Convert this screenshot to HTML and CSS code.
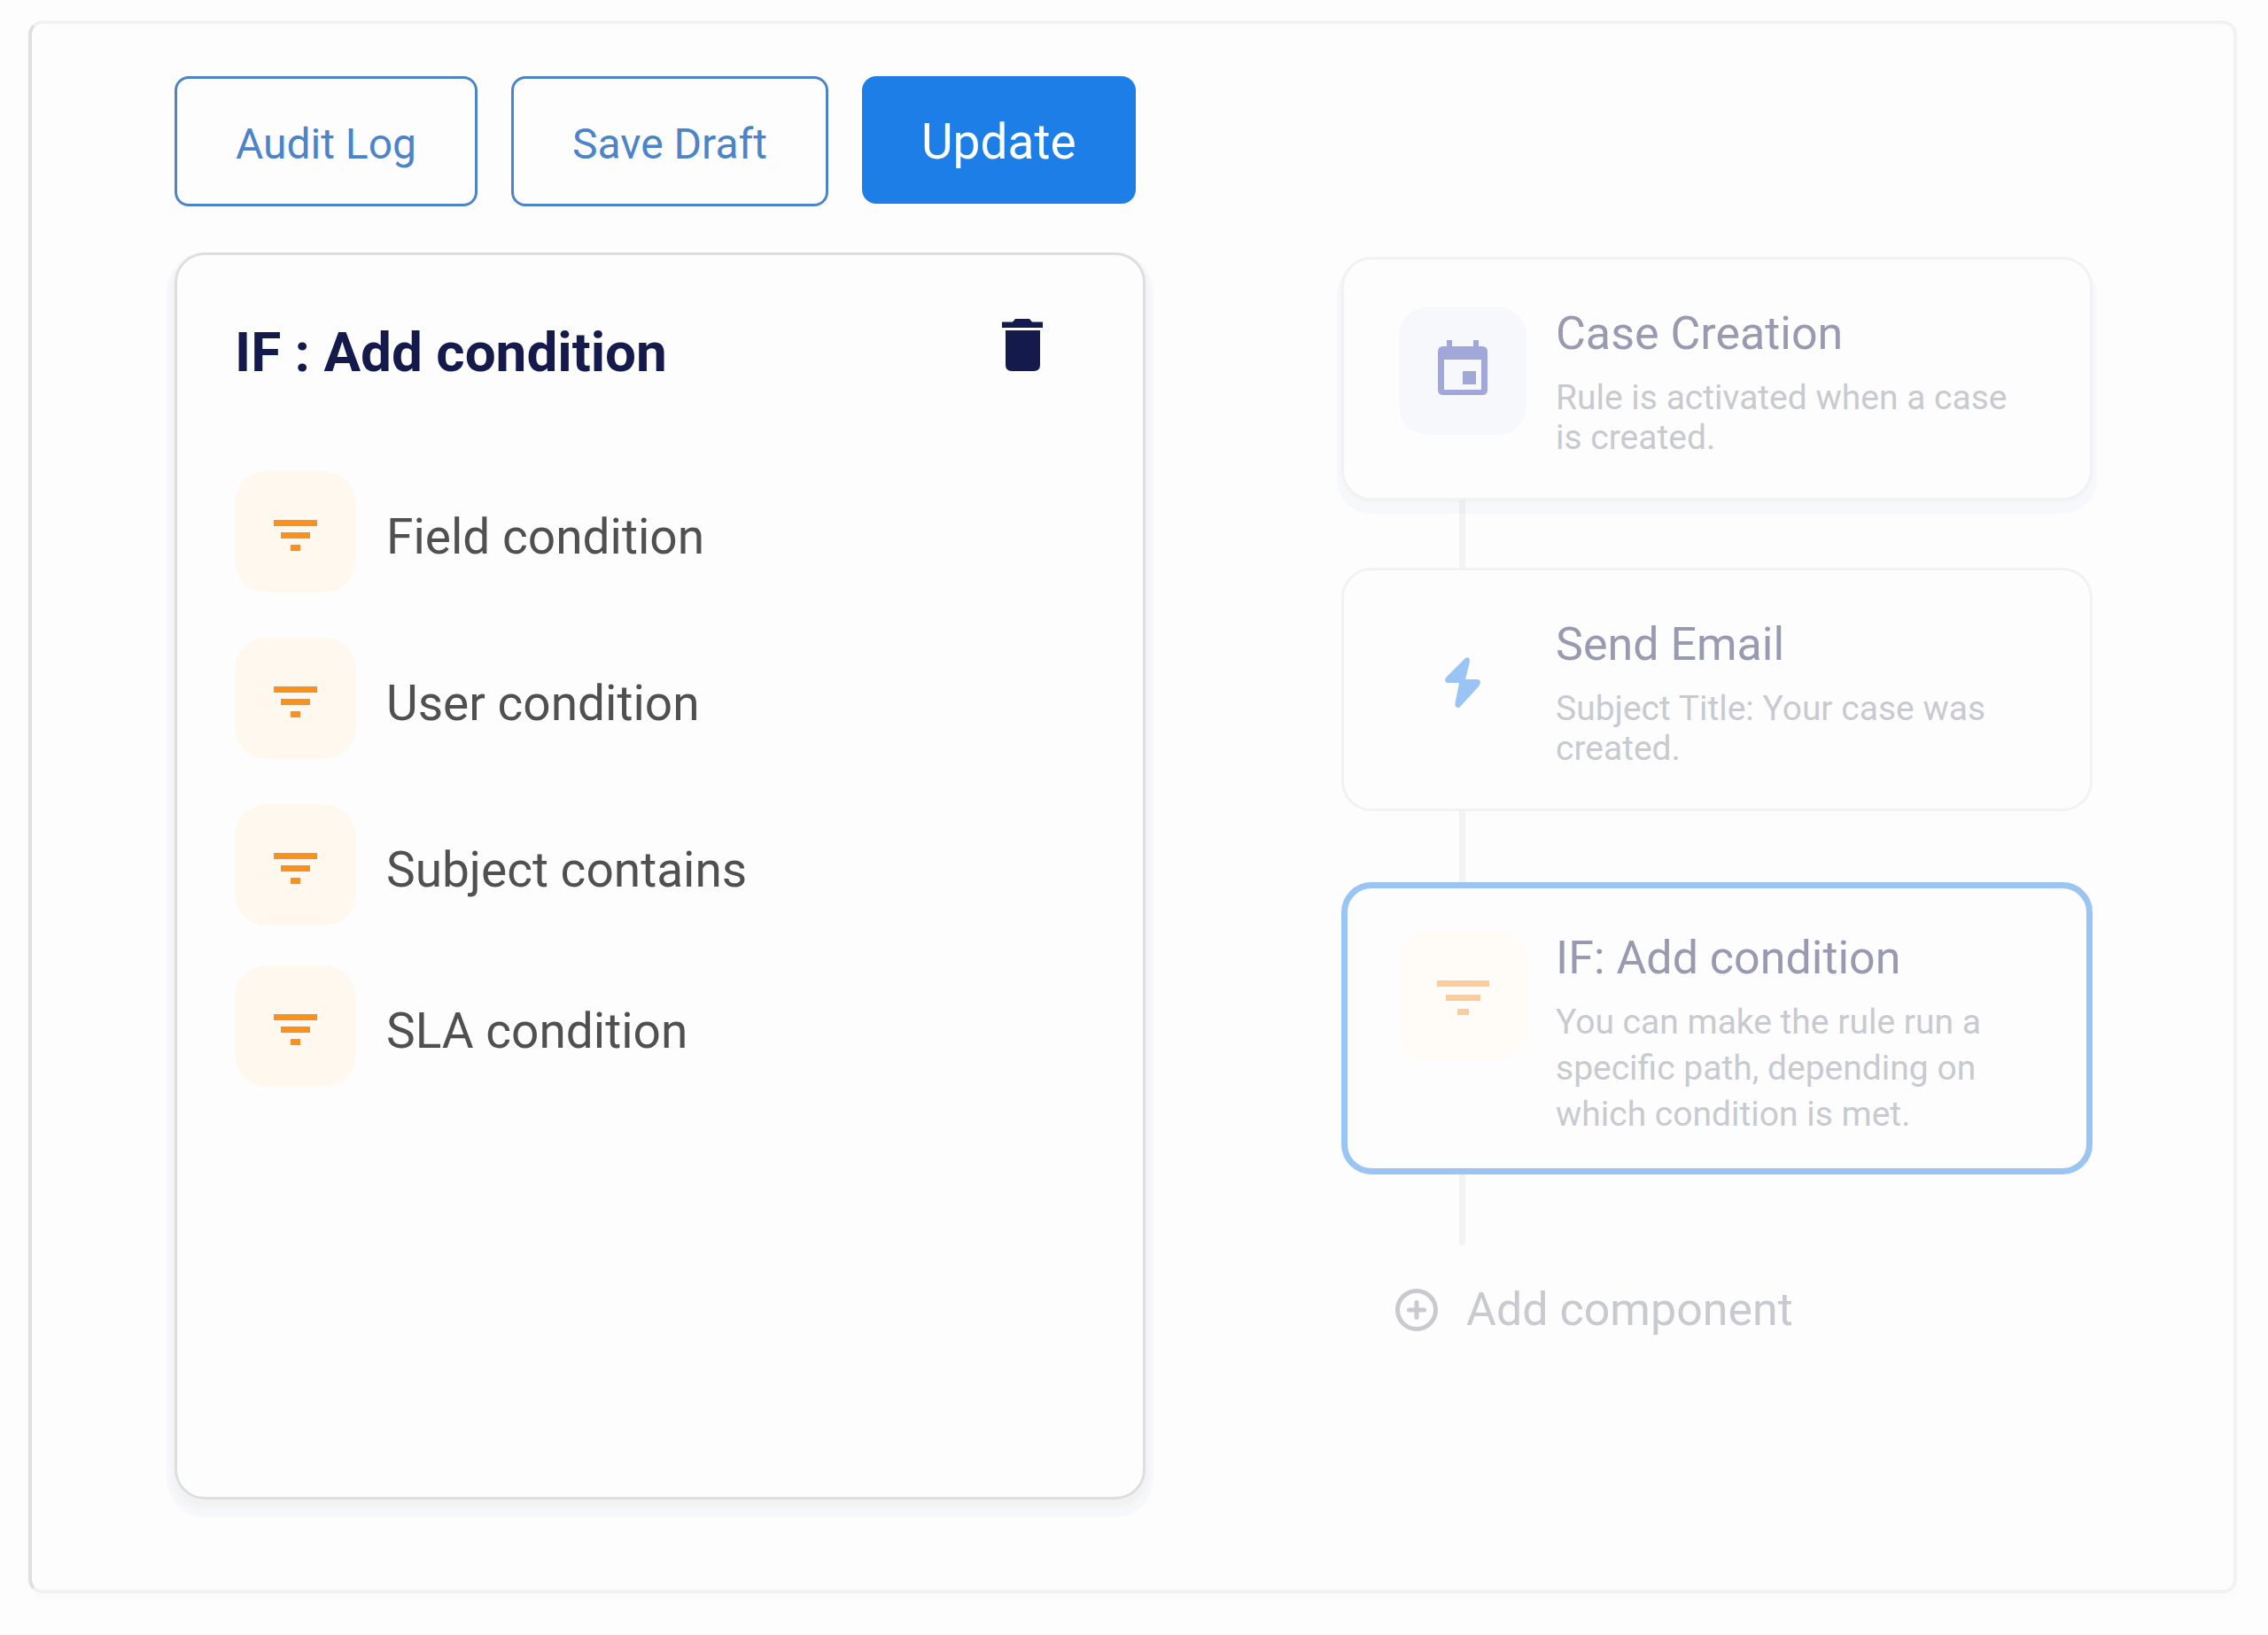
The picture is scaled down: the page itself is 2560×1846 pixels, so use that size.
FILE: index.html
```html
<!DOCTYPE html>
<html lang="en">
<head>
<meta charset="utf-8">
<meta name="viewport" content="width=device-width, initial-scale=1">
<title>Rule editor</title>
<link rel="stylesheet" href="styles.css">
</head>
<body>
<svg class="sprite" aria-hidden="true">
  <symbol id="filter" viewBox="0 0 49 42">
    <path d="M0 7h49v7H0zM8 21h33v7H8zM19 35h11v7H19z"/>
  </symbol>
</svg>
<main class="frame">
  <div class="toolbar">
    <button class="btn" type="button">Audit Log</button>
    <button class="btn" type="button">Save Draft</button>
    <button class="btn btn-primary" type="button">Update</button>
  </div>
  <div class="workspace">
    <section class="panel">
      <header class="panel-header">
        <h1 class="panel-title">IF : Add condition</h1>
        <button class="icon-btn" type="button" aria-label="Delete">
          <svg width="46" height="59" viewBox="0 0 46 59"><path d="M0 3.500h12L15 0h16l3 3.500h12V10H0zM4 13h39v39q0 7-7 7H11q-7 0-7-7z"/></svg>
        </button>
      </header>
      <ul class="conditions">
        <li><button class="condition" type="button"><span class="tile"><svg width="49" height="42"><use href="#filter"/></svg></span><span class="condition-label">Field condition</span></button></li>
        <li><button class="condition" type="button"><span class="tile"><svg width="49" height="42"><use href="#filter"/></svg></span><span class="condition-label">User condition</span></button></li>
        <li><button class="condition" type="button"><span class="tile"><svg width="49" height="42"><use href="#filter"/></svg></span><span class="condition-label">Subject contains</span></button></li>
        <li><button class="condition" type="button"><span class="tile"><svg width="49" height="42"><use href="#filter"/></svg></span><span class="condition-label">SLA condition</span></button></li>
      </ul>
    </section>
    <section class="flow">
      <article class="card card-raised">
        <span class="card-icon card-icon-trigger">
          <svg width="56" height="70" viewBox="0 0 56 70"><path fill-rule="evenodd" d="M10 0h6v7h24V0h6v7h4q6 0 6 6v43q0 6-6 6H6q-6 0-6-6V13q0-6 6-6h4zM7 22v34h42V22zM28 35h15v15H28z"/></svg>
        </span>
        <div class="card-body">
          <h2 class="card-title">Case Creation</h2>
          <p class="card-text">Rule is activated when a case is created.</p>
        </div>
      </article>
      <div class="connector connector-short"></div>
      <article class="card">
        <span class="card-icon card-icon-action">
          <svg width="40" height="57" viewBox="0 0 40 57"><path d="M22 2Q25-1 27 1Q28 2 28 5L23 25H36Q41 25 39.500 30L38 33L17 56Q15 58 12.500 56Q11 55 11.500 52L16 29H4Q-1 29 .5 24L2 22Z"/></svg>
        </span>
        <div class="card-body">
          <h2 class="card-title">Send Email</h2>
          <p class="card-text">Subject Title: Your case was created.</p>
        </div>
      </article>
      <div class="connector"></div>
      <article class="card card-selected">
        <span class="card-icon card-icon-condition">
          <svg width="59" height="43" viewBox="0 0 59 43"><path d="M0 4h59v7H0zM10 20h39v7H10zM23 36h13v7H23z"/></svg>
        </span>
        <div class="card-body">
          <h2 class="card-title">IF: Add condition</h2>
          <p class="card-text">You can make the rule run a specific path, depending on which condition is met.</p>
        </div>
      </article>
      <div class="connector"></div>
      <button class="add" type="button">
        <svg width="48" height="48" viewBox="0 0 48 48" fill="none" stroke="currentColor" stroke-width="5"><circle cx="24" cy="24" r="21.500"/><path stroke-linecap="round" d="M24 15.500v17M15.500 24h17"/></svg>
        <span>Add component</span>
      </button>
    </section>
  </div>
</main>
</body>
</html>
```
FILE: styles.css
```css
* {
  box-sizing: border-box;
}

body {
  margin: 0;
  min-height: 100vh;
  display: flex;
  flex-direction: column;
  padding: 23px 35px 47px 32px;
  background: #fdfdfd;
  font-family: Roboto, "Liberation Sans", sans-serif;
}

h1, h2, p, ul {
  margin: 0;
  padding: 0;
}

ul {
  list-style: none;
}

button {
  margin: 0;
  padding: 0;
  border: 0;
  background: none;
  font: inherit;
  color: inherit;
  text-align: left;
  cursor: pointer;
}

svg {
  display: block;
  flex: none;
}

.sprite {
  position: absolute;
  width: 0;
  height: 0;
}

.frame {
  flex: 1;
  display: flex;
  flex-direction: column;
  padding: 59px 159px 102px 161px;
  border: 4px solid #f2f2f2;
  border-left-color: #dedfe0;
  border-radius: 16px;
  box-shadow: 0 6px 8px rgba(0, 0, 0, 0.01);
}

.toolbar {
  display: flex;
  align-items: flex-start;
  gap: 38px;
  height: 147px;
  margin-bottom: 52px;
}

.btn {
  height: 147px;
  padding: 6px 66px 0;
  border: 3px solid #4b84c9;
  border-radius: 16px;
  color: #4b84c9;
  font-size: 48px;
  white-space: nowrap;
}

.btn-primary {
  height: 144px;
  padding: 4px 64px 0;
  border-color: #1d7ee7;
  background: #1d7ee7;
  color: #fff;
  font-size: 55px;
}

.workspace {
  flex: 1;
  display: grid;
  grid-template-columns: 1096fr 848fr;
  column-gap: 221px;
}

.panel {
  padding: 70px 65px;
  border: 3px solid #dddedf;
  border-radius: 34px;
  background: #fdfdfd;
  box-shadow: 0 6px 4px 2px #f2f2f3, 0 8px 4px 6px #f5f6f8, 0 11px 2px 9px #f7f8fc;
}

.panel-header {
  display: flex;
  align-items: flex-start;
  justify-content: space-between;
  margin-bottom: 94px;
  padding-right: 48px;
  color: #151a4d;
}

.panel-title {
  font-size: 62px;
  font-weight: 700;
  line-height: 80px;
}

.icon-btn {
  padding-top: 2px;
  fill: currentColor;
}

.conditions {
  display: flex;
  flex-direction: column;
  gap: 51px;
}

.condition {
  display: flex;
  align-items: center;
  gap: 34px;
  width: 100%;
  color: #505050;
  font-size: 55px;
}

.condition-label {
  padding-top: 10px;
}

.conditions li:last-child {
  margin-top: -6px;
}

.tile {
  display: grid;
  place-items: center;
  width: 137px;
  height: 137px;
  border-radius: 36px;
  background: #fff8ee;
  fill: #f79220;
}

.flow {
  padding-top: 5px;
}

.card {
  display: flex;
  gap: 33px;
  padding: 54px 78px 45px 62px;
  border: 3px solid #f2f2f2;
  border-radius: 34px;
  background: #fdfdfd;
}

.card-raised {
  box-shadow: 0 2px 3px #f3f3f4, 0 10px 1px 5px #f7f8fc;
}

.card-selected {
  padding: 49px 74px 35px 58px;
  border: 7px solid #9ac4f4;
}

.card-icon {
  flex: none;
  display: grid;
  place-items: center;
  width: 144px;
  height: 144px;
  border-radius: 32px;
}

.card-icon-trigger {
  background: #f6f8fc;
  fill: #a2a7d9;
}

.card-icon-action {
  fill: #9ac4f4;
}

.card-icon-condition {
  background: #fffbf6;
  fill: #fbcd9a;
}

.card-title {
  margin-bottom: 20px;
  color: #989ab2;
  font-size: 52px;
  font-weight: 400;
  line-height: 60px;
}

.card-text {
  color: #c8cad0;
  font-size: 39px;
  line-height: 45px;
}

.card-selected .card-title {
  margin-bottom: 16px;
}

.card-selected .card-text {
  line-height: 52px;
}

.connector {
  width: 7px;
  height: 80px;
  margin-left: 133px;
  background: rgba(0, 0, 0, 0.04);
}

.connector-short {
  height: 76px;
}

.add {
  display: flex;
  align-items: center;
  gap: 32px;
  margin: 43px 0 0 61px;
  color: #c8cad0;
  font-size: 52px;
  line-height: 60px;
}
```
